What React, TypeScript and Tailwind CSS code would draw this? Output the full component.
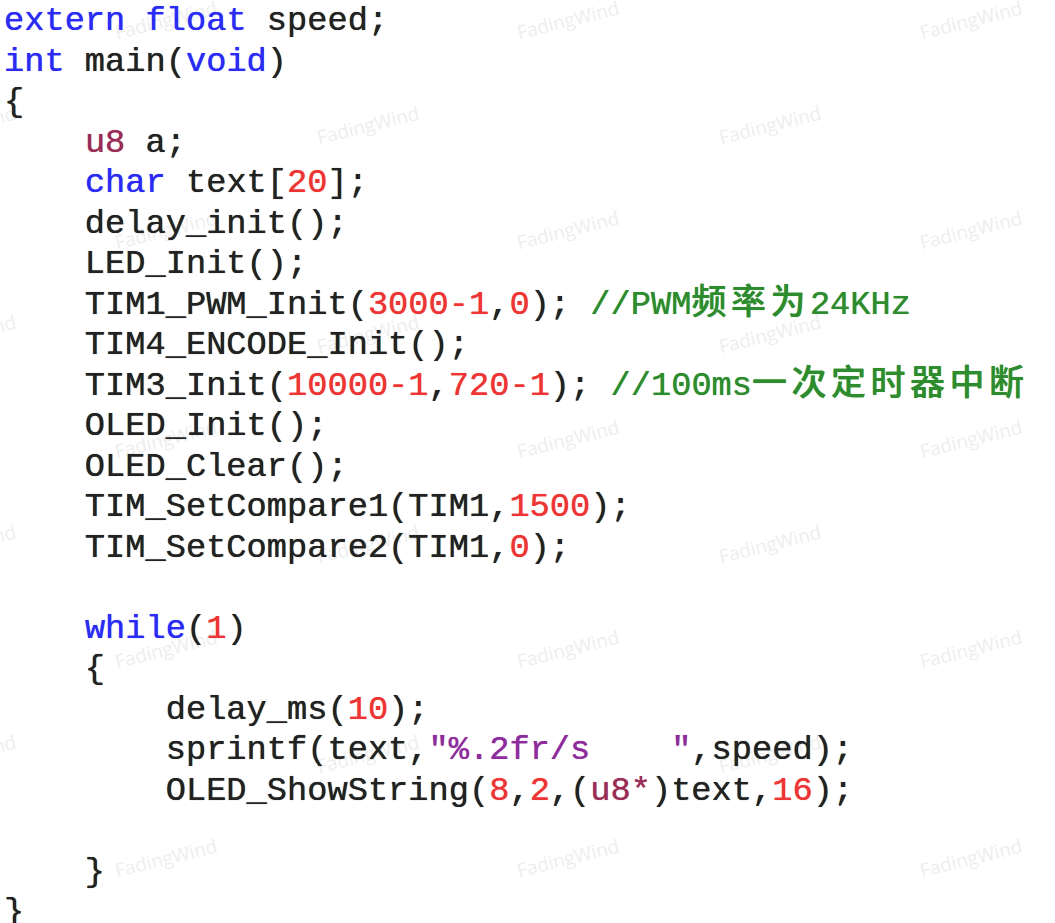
import React from "react";

type Tok = [string, string?];

const K = "text-[#2b2bf4]";
const T = "text-[#9a2d57]";
const N = "text-[#ee3535]";
const S = "text-[#8e2c9c]";
const C = "text-[#2e8c2e]";

const lines: Tok[][] = [
  [["extern", K], [" "], ["float", K], [" speed;"]],
  [["int", K], [" main("], ["void", K], [")"]],
  [["{"]],
  [["    "], ["u8", T], [" a;"]],
  [["    "], ["char", K], [" text["], ["20", N], ["];"]],
  [["    delay_init();"]],
  [["    LED_Init();"]],
  [["    TIM1_PWM_Init("], ["3000-1", N], [","], ["0", N], ["); "], ["//PWM", C], ["CJK:频率为", C], ["24KHz", C]],
  [["    TIM4_ENCODE_Init();"]],
  [["    TIM3_Init("], ["10000-1", N], [","], ["720-1", N], ["); "], ["//100ms", C], ["CJK:一次定时器中断", C]],
  [["    OLED_Init();"]],
  [["    OLED_Clear();"]],
  [["    TIM_SetCompare1(TIM1,"], ["1500", N], [");"]],
  [["    TIM_SetCompare2(TIM1,"], ["0", N], [");"]],
  [[""]],
  [["    "], ["while", K], ["("], ["1", N], [")"]],
  [["    {"]],
  [["        delay_ms("], ["10", N], [");"]],
  [["        sprintf(text,"], ["\"%.2fr/s    \"", S], [",speed);"]],
  [["        OLED_ShowString("], ["8", N], [","], ["2", N], [",("], ["u8*", T], [")text,"], ["16", N], [");"]],
  [[""]],
  [["    }"]],
  [["}"]],
];

const marks: { x: number; y: number }[] = [];
for (let r = 0; r < 9; r++) {
  const yc = 20 + r * 104.8;
  const xs = r % 2 === 0 ? [113, 515, 918] : [-88, 315, 717];
  for (const x of xs) marks.push({ x, y: yc });
}

function Token({ t }: { t: Tok }) {
  const [text, cls] = t;
  if (text.startsWith("CJK:")) {
    return (
      <span className={`${cls} font-['Noto_Sans_CJK_SC',sans-serif] font-medium text-[35px] leading-[0px] tracking-[4.5px]`}>
        {text.slice(4)}
      </span>
    );
  }
  return <span className={cls}>{text}</span>;
}

export default function App() {
  return (
    <div className="relative w-[1055px] h-[923px] overflow-hidden bg-white">
      <div className="absolute inset-0 pointer-events-none">
        {marks.map((m, i) => (
          <div
            key={i}
            className="absolute w-[110px] h-[26px] flex items-center justify-center -rotate-[14deg] font-['Open_Sans',sans-serif] text-[19px] text-[#eeeeee] whitespace-nowrap"
            style={{ left: m.x - 2, top: m.y - 13 }}
          >
            FadingWind
          </div>
        ))}
      </div>
      <div className="relative flex flex-col pl-1 pt-[1px] font-['Liberation_Mono','Noto_Sans_CJK_SC',monospace] text-[33.7px] leading-[40.5px] text-[#222222] whitespace-pre [text-shadow:0_0_0.7px_currentColor]">
        {lines.map((ln, i) => (
          <div key={i} className="h-[40.5px]">
            {ln.map((t, j) => (
              <Token key={j} t={t} />
            ))}
          </div>
        ))}
      </div>
    </div>
  );
}
